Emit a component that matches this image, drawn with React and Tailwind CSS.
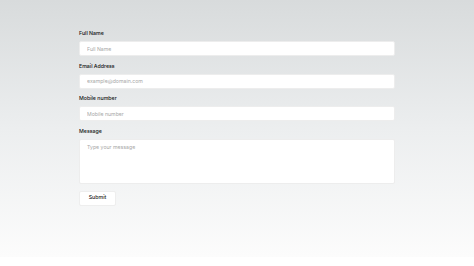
import React from 'react';

export default function App() {
    const fields = [
        { label: 'Full Name', placeholder: 'Full Name' },
        { label: 'Email Address', placeholder: 'example@domain.com' },
        { label: 'Mobile number', placeholder: 'Mobile number' },
    ];

    return (
        <div className="w-full h-[266px] bg-white" style={{ fontFamily: 'Inter, "Liberation Sans", sans-serif' }}>
            <div className="h-[257px] bg-gradient-to-b from-[#d8dbdc] via-[#eceeef] to-[#fcfcfc] pt-[29px] pl-[79px]">
                <form className="w-[316px] flex flex-col" onSubmit={e => e.preventDefault()}>
                    {fields.map((f) => (
                        <div key={f.label} className="flex flex-col mb-[5.5px]">
                            <label className="text-[5.25px] font-medium text-[#111] leading-[8px] mb-[4px]">{f.label}</label>
                            <input
                                placeholder={f.placeholder}
                                className="h-[15px] w-full bg-white rounded-[2px] border border-[#ededed] px-[7px] text-[5.2px] text-[#333] placeholder:text-[#a8a8a8] outline-none"
                            />
                        </div>
                    ))}
                    <div className="flex flex-col mb-[7px]">
                        <label className="text-[5.25px] font-medium text-[#111] leading-[8px] mb-[4px]">Message</label>
                        <textarea
                            placeholder="Type your message"
                            className="h-[45px] w-full bg-white rounded-[2px] border border-[#ededed] px-[7px] py-[4px] text-[5.2px] text-[#333] placeholder:text-[#a8a8a8] outline-none resize-none"
                        />
                    </div>
                    <button className="w-[37px] h-[15px] bg-white rounded-[2px] border border-[#eeeeee] text-[5.25px] text-[#222] font-medium">
                        Submit
                    </button>
                </form>
            </div>
        </div>
    );
}
